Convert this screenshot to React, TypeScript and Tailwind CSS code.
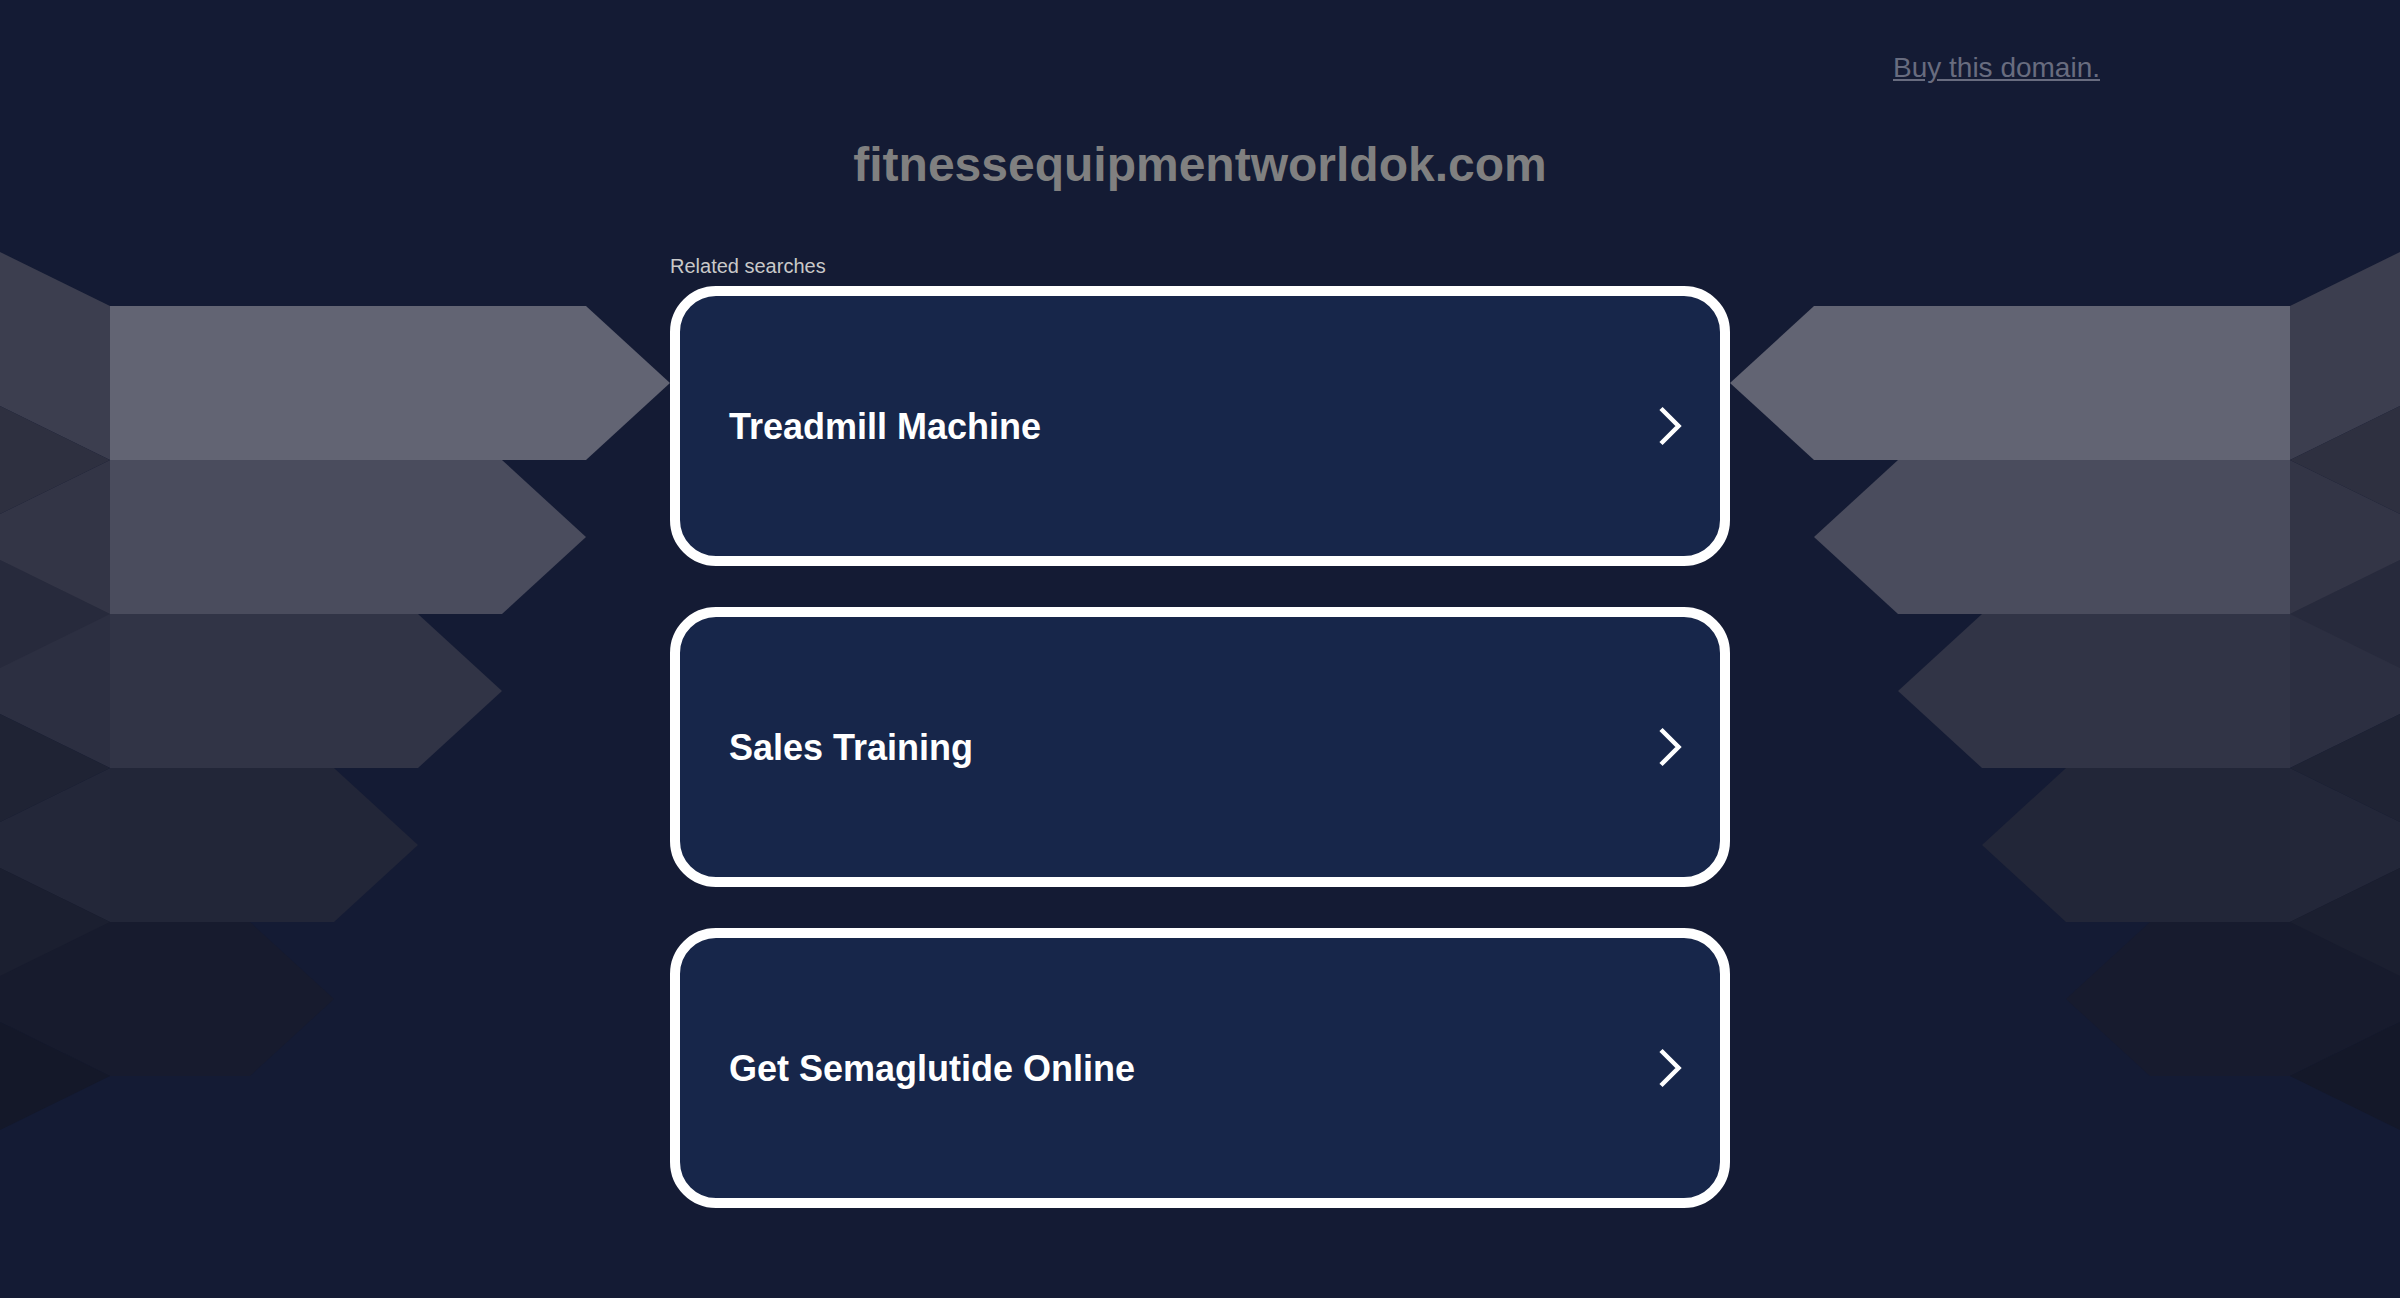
const rows = [
  { body: "#626473", side: "#3c3e4f" },
  { body: "#4a4c5d", side: "#333546" },
  { body: "#313446", side: "#2c2f41" },
  { body: "#222638", side: "#232739" },
  { body: "#171b2e", side: "#171b2d" },
];

// triangles where neighbouring side faces meet (gap or overlap)
const joints = ["#2e3040", "#272a3c", "#1f2334", "#1b1f30", "#141829"];

const searches = ["Treadmill Machine", "Sales Training", "Get Semaglutide Online"];

function Wing() {
  return (
    <g>
      {rows.map((r, i) => {
        const t = 306 + 154 * i;
        const b = t + 154;
        const s = i % 2 === 0 ? -54 : 54;
        return (
          <polygon
            key={"s" + i}
            points={`0,${t + s} 110,${t} 110,${b} 0,${b + s}`}
            fill={r.side}
          />
        );
      })}
      {joints.map((c, i) => {
        const b = 460 + 154 * i;
        return <polygon key={"j" + i} points={`0,${b - 54} 110,${b} 0,${b + 54}`} fill={c} />;
      })}
      {rows.map((r, i) => {
        const t = 306 + 154 * i;
        const b = t + 154;
        const e = 586 - 84 * i;
        const x = 670 - 84 * i;
        return (
          <polygon
            key={"b" + i}
            points={`110,${t} ${e},${t} ${x},${t + 77} ${e},${b} 110,${b}`}
            fill={r.body}
          />
        );
      })}
    </g>
  );
}

function Chevron() {
  return (
    <svg width="24" height="40" viewBox="0 0 24 40" className="shrink-0">
      <polyline
        points="3,2.5 20.5,20 3,37.5"
        fill="none"
        stroke="#ffffff"
        strokeWidth="4.5"
        strokeLinejoin="miter"
      />
    </svg>
  );
}

export default function App() {
  return (
    <div className="relative min-h-[1298px] w-full overflow-hidden bg-[#141b34] font-['Liberation_Sans',Arial,sans-serif]">
      <svg
        className="absolute inset-0"
        width="2400"
        height="1298"
        viewBox="0 0 2400 1298"
      >
        <Wing />
        <g transform="translate(2400,0) scale(-1,1)">
          <Wing />
        </g>
      </svg>

      <div className="relative">
        <div className="mx-auto w-[1800px] pt-[52px] text-right">
          <a href="#" className="text-[28px] leading-[32px] text-[#686c7f] underline">
            Buy this domain.
          </a>
        </div>

        <h1 className="mt-[53px] text-center text-[48px] font-bold leading-[56px] text-[#808080]">
          fitnessequipmentworldok.com
        </h1>

        <div className="mx-auto mt-[61px] w-[1060px]">
          <p className="text-[20px] leading-[24px] text-[#c9c9c9]">Related searches</p>
          <div className="mt-[8px] flex flex-col gap-[41px]">
            {searches.map((s) => (
              <a
                key={s}
                href="#"
                className="flex h-[280px] items-center justify-between rounded-[46px] border-[10px] border-white bg-[#17264a] pl-[49px] pr-[38px]"
              >
                <span className="pt-[2px] text-[36px] font-bold leading-[42px] text-white">{s}</span>
                <Chevron />
              </a>
            ))}
          </div>
        </div>
      </div>
    </div>
  );
}
